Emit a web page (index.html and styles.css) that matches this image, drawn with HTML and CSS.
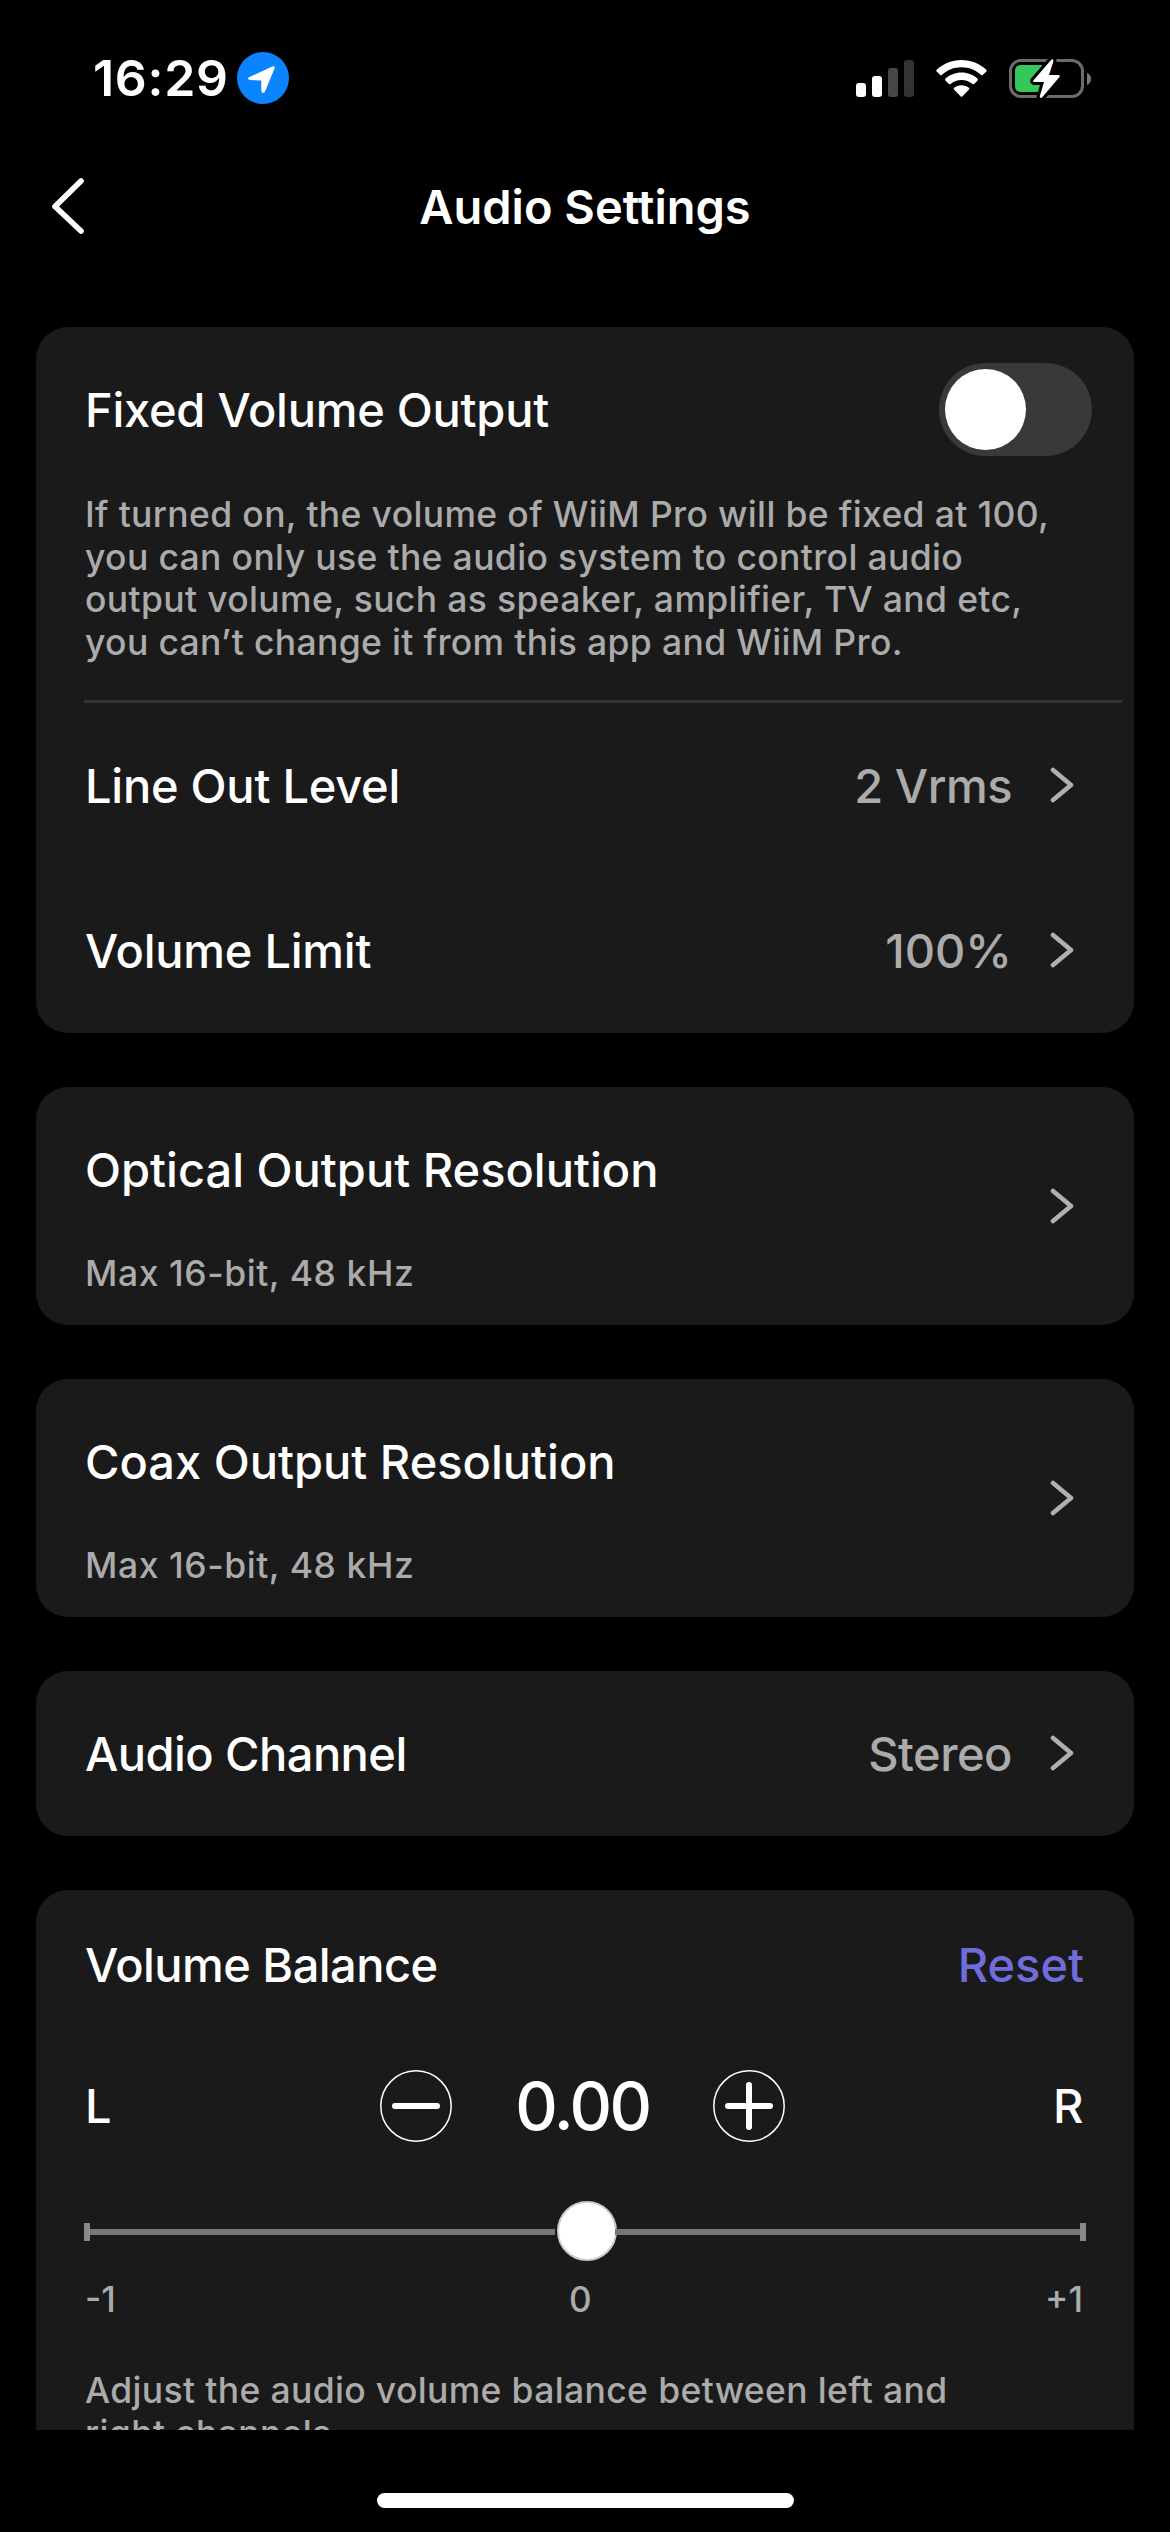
FILE: index.html
```html
<!DOCTYPE html>
<html lang="en">
<head>
<meta charset="utf-8">
<title>Audio Settings</title>
<link rel="stylesheet" href="styles.css">
</head>
<body>
<div class="screen">
  <div class="status-bar">
    <div class="status-left">
      <span class="time">16:29</span>
      <svg class="location" width="52" height="52" viewBox="0 0 52 52"><circle cx="26" cy="26" r="26" fill="#0a84ff"/><path d="M12.500 25 L35.300 14.600 Q38.600 13.400 37.400 16.700 L28 39.600 Q26.300 42.400 24.400 39.400 L24.200 28.400 L12.700 28 Q9.200 26.700 12.500 25Z" fill="#fff"/></svg>
    </div>
    <div class="status-right">
      <svg width="58" height="37" viewBox="0 0 58 37"><rect x="0" y="23" width="10" height="14" rx="3" fill="#fff"/><rect x="16" y="16" width="10" height="21" rx="3" fill="#fff"/><rect x="32" y="8" width="10" height="29" rx="3" fill="#474747"/><rect x="48" y="0" width="10" height="37" rx="3" fill="#333"/></svg>
      <svg class="wifi" width="51" height="37" viewBox="0 0 51 37" fill="#fff"><path d="M25.500 0 C35 0 43.800 3.600 50.300 9.800 Q51.200 10.700 50.300 11.600 L46.800 15 Q46 15.700 45.200 15 C39.800 10 33 7.300 25.500 7.300 S11.200 10 5.800 15 Q5 15.700 4.200 15 L.7 11.600 Q-.2 10.700 .7 9.800 C7.200 3.600 16 0 25.500 0Z"/><path d="M25.500 12.600 C31.700 12.600 37.300 14.900 41.600 18.700 Q42.400 19.600 41.600 20.400 L38.100 23.900 Q37.300 24.600 36.400 23.900 C33.400 21.300 29.600 19.900 25.500 19.900 S17.600 21.300 14.600 23.900 Q13.700 24.600 12.900 23.900 L9.400 20.400 Q8.600 19.600 9.400 18.700 C13.700 14.900 19.300 12.600 25.500 12.600Z"/><path d="M25.500 25.300 C28.300 25.300 30.900 26.200 32.900 27.800 Q33.800 28.600 33 29.400 L26.300 36.400 Q25.500 37.200 24.700 36.400 L18 29.400 Q17.200 28.600 18.100 27.800 C20.100 26.200 22.700 25.300 25.500 25.300Z"/></svg>
      <svg width="83" height="41" viewBox="0 0 83 41"><rect x="1.500" y="2.500" width="72" height="36" rx="10.500" fill="none" stroke="#6b6b6b" stroke-width="3"/><path d="M78 15 Q82 16.500 82 21 T78 27Z" fill="#777"/><path d="M12 7 H33 L33 34 H12 Q6 34 6 28 V13 Q6 7 12 7Z" fill="#34c759"/><path d="M33 7 H46 L34 34 H31Z" fill="#000"/><path d="M42.500 1.500 L24.500 22.200 Q23.500 24 25.500 24 L35 24 L30.700 38.500 Q31.500 41 33.500 39 L50.700 18.800 Q51.500 17 49.500 17 L40 17 L44.500 3 Q44.300 .3 42.500 1.500Z" fill="#fff" stroke="#000" stroke-width="6" paint-order="stroke"/></svg>
    </div>
  </div>

  <header class="nav">
    <svg class="back" width="34" height="58" viewBox="0 0 34 58"><path d="M31 4 L5 29.500 L31 54" fill="none" stroke="#fff" stroke-width="5.600" stroke-linecap="round" stroke-linejoin="round"/></svg>
    <h1 class="nav-title">Audio Settings</h1>
  </header>

  <main class="content">
    <section class="card">
      <div class="row">
        <span class="label">Fixed Volume Output</span>
        <span class="toggle"><span class="toggle-knob"></span></span>
      </div>
      <p class="note">If turned on, the volume of WiiM Pro will be fixed at 100,<br>you can only use the audio system to control audio<br>output volume, such as speaker, amplifier, TV and etc,<br>you can’t change it from this app and WiiM Pro.</p>
      <div class="divider"></div>
      <div class="row">
        <span class="label">Line Out Level</span>
        <span class="value">2 Vrms</span>
        <svg class="chevron" width="24" height="36" viewBox="0 0 24 36"><path d="M3 3 L21 18 L3 33"/></svg>
      </div>
      <div class="row">
        <span class="label">Volume Limit</span>
        <span class="value value-number">100%</span>
        <svg class="chevron" width="24" height="36" viewBox="0 0 24 36"><path d="M3 3 L21 18 L3 33"/></svg>
      </div>
    </section>

    <section class="card card-link">
      <div class="stack">
        <span class="label label-wide">Optical Output Resolution</span>
        <span class="detail">Max 16-bit, 48 kHz</span>
      </div>
      <svg class="chevron" width="24" height="36" viewBox="0 0 24 36"><path d="M3 3 L21 18 L3 33"/></svg>
    </section>

    <section class="card card-link">
      <div class="stack">
        <span class="label label-wide">Coax Output Resolution</span>
        <span class="detail">Max 16-bit, 48 kHz</span>
      </div>
      <svg class="chevron" width="24" height="36" viewBox="0 0 24 36"><path d="M3 3 L21 18 L3 33"/></svg>
    </section>

    <section class="card">
      <div class="row">
        <span class="label label-tight">Audio Channel</span>
        <span class="value">Stereo</span>
        <svg class="chevron" width="24" height="36" viewBox="0 0 24 36"><path d="M3 3 L21 18 L3 33"/></svg>
      </div>
    </section>

    <section class="card balance">
      <div class="balance-head">
        <span class="label label-tight">Volume Balance</span>
        <span class="reset">Reset</span>
      </div>
      <div class="balance-controls">
        <span class="side">L</span>
        <div class="stepper">
          <svg width="72" height="72" viewBox="0 0 72 72"><circle cx="36" cy="36" r="35.200" fill="none" stroke="#fff" stroke-width="1.500"/><path d="M15 36 H57" stroke="#fff" stroke-width="6" stroke-linecap="round"/></svg>
          <span class="amount">0.00</span>
          <svg width="72" height="72" viewBox="0 0 72 72"><circle cx="36" cy="36" r="35.200" fill="none" stroke="#fff" stroke-width="1.500"/><path d="M15 36 H57 M36 15 V57" stroke="#fff" stroke-width="6" stroke-linecap="round"/></svg>
        </div>
        <span class="side">R</span>
      </div>
      <div class="slider"><span class="tick"></span><span class="track"></span><span class="thumb"></span><span class="track"></span><span class="tick"></span></div>
      <div class="scale"><span>-1</span><span>0</span><span>+1</span></div>
      <p class="note">Adjust the audio volume balance between left and<br>right channels.</p>
    </section>
  </main>
  <div class="home-area"><div class="home-bar"></div></div>
</div>
</body>
</html>
```

FILE: styles.css
```css
* { box-sizing: border-box; margin: 0; padding: 0; }
body { background: #000; color: #fff; font-family: Inter, "Liberation Sans", sans-serif; }
svg { display: block; flex: none; }
.screen { width: 1170px; height: 2532px; display: flex; flex-direction: column; overflow: hidden; }

.status-bar { height: 156px; display: flex; justify-content: space-between; padding: 0 78px 0 93px; align-items: center; flex: none; }
.status-left { display: flex; align-items: center; gap: 10px; }
.time { width: 134px; font-size: 50px; font-weight: 600; line-height: 60px; letter-spacing: 0.700px; white-space: nowrap; }
.status-right { display: flex; align-items: center; gap: 22px; }

.nav { height: 171px; display: flex; align-items: flex-start; padding: 21px 50px 0; flex: none; }
.nav-title { flex: 1; margin-right: 34px; text-align: center; font-size: 47px; font-weight: 600; line-height: 60px; }

.content { flex: none; height: 2103px; overflow: hidden; display: flex; flex-direction: column; gap: 54px; padding: 0 36px; }
.card { background: #1a1a1a; border-radius: 32px; flex: none; }
.row { height: 165px; display: flex; align-items: center; padding: 0 60px 0 49px; }
.label { flex: 1; font-size: 47px; font-weight: 500; letter-spacing: -0.250px; white-space: nowrap; }
.label-wide { letter-spacing: 0; }
.label-tight { letter-spacing: -0.550px; }
.value { font-size: 47px; font-weight: 500; letter-spacing: -0.500px; color: #ababab; margin-right: 38px; }
.value-number { letter-spacing: 0; }
.chevron path { fill: none; stroke: #b0b0b0; stroke-width: 4.600; stroke-linecap: round; stroke-linejoin: round; }
.toggle { width: 153px; height: 93px; border-radius: 47px; background: #393939; padding: 6px; margin-right: -18px; }
.toggle-knob { display: block; width: 81px; height: 81px; border-radius: 50%; background: #fff; }
.note { font-size: 35.500px; font-weight: 450; line-height: 42.700px; letter-spacing: 0.350px; color: #ababab; padding: 2px 49px 0; white-space: nowrap; }
.divider { height: 3px; margin: 35px 12px 0 48px; background: #333; }

.card-link { display: flex; align-items: center; height: 238px; padding: 0 60px 0 49px; }
.stack { flex: 1; height: 238px; display: flex; flex-direction: column; }
.stack .label { flex: none; line-height: 165px; }
.detail { font-size: 35.500px; font-weight: 450; line-height: 43px; letter-spacing: 0.550px; color: #ababab; }

.balance { height: 620px; }
.balance-head { height: 149px; display: flex; align-items: center; padding: 0 50px 0 49px; }
.reset { font-size: 47px; font-weight: 500; color: #6f6ddc; }
.balance-controls { height: 134px; display: flex; align-items: center; justify-content: space-between; padding: 0 54px 0 49px; }
.side { width: 27px; font-size: 47px; font-weight: 500; }
.stepper { display: flex; align-items: center; }
.amount { width: 261px; text-align: center; font-size: 66px; font-weight: 500; letter-spacing: -2.500px; }
.slider { height: 105px; display: flex; align-items: center; padding: 13px 48px 0; }
.track { flex: 1; height: 6px; background: #777; }
.tick { width: 6px; height: 18px; background: #888; }
.thumb { width: 60px; height: 60px; margin: 0 -1.500px 2px 1.500px; border-radius: 50%; background: #fff; border: 2px solid #ccc; }
.scale { height: 90px; display: flex; justify-content: space-between; padding: 0 51px 0 49px; font-size: 35px; font-weight: 450; line-height: 42px; color: #ababab; }

.home-area { flex: 1; display: flex; justify-content: center; padding-top: 63px; }
.home-bar { width: 417px; height: 15px; border-radius: 8px; background: #fff; }
```
